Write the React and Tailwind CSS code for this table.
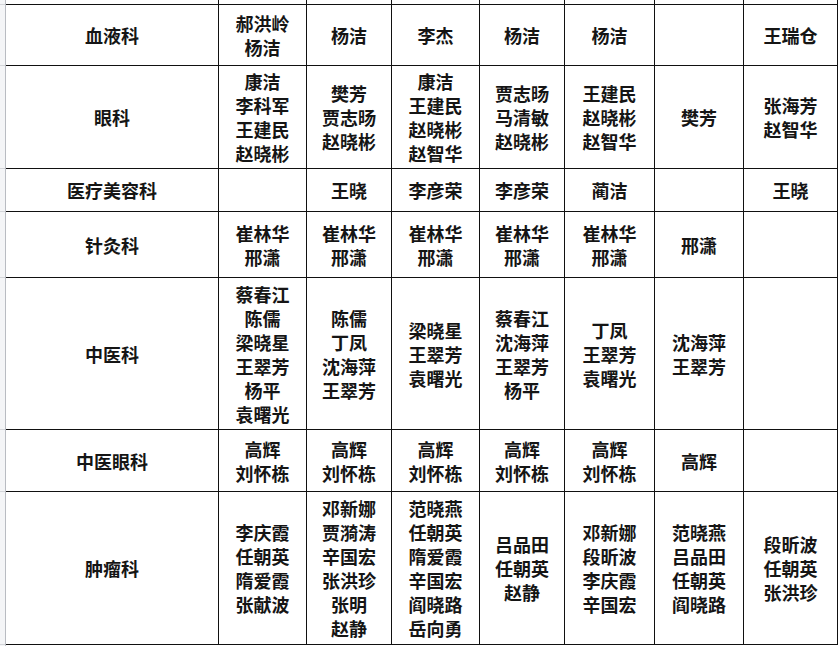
import React from "react";

const rows = [
  { label: "血液科", cells: [["郝洪岭", "杨洁"], ["杨洁"], ["李杰"], ["杨洁"], ["杨洁"], [], ["王瑞仓"]] },
  {
    label: "眼科",
    cells: [
      ["康洁", "李科军", "王建民", "赵晓彬"],
      ["樊芳", "贾志旸", "赵晓彬"],
      ["康洁", "王建民", "赵晓彬", "赵智华"],
      ["贾志旸", "马清敏", "赵晓彬"],
      ["王建民", "赵晓彬", "赵智华"],
      ["樊芳"],
      ["张海芳", "赵智华"],
    ],
  },
  { label: "医疗美容科", cells: [[], ["王晓"], ["李彦荣"], ["李彦荣"], ["蔺洁"], [], ["王晓"]] },
  {
    label: "针灸科",
    cells: [
      ["崔林华", "邢潇"],
      ["崔林华", "邢潇"],
      ["崔林华", "邢潇"],
      ["崔林华", "邢潇"],
      ["崔林华", "邢潇"],
      ["邢潇"],
      [],
    ],
  },
  {
    label: "中医科",
    cells: [
      ["蔡春江", "陈儒", "梁晓星", "王翠芳", "杨平", "袁曙光"],
      ["陈儒", "丁凤", "沈海萍", "王翠芳"],
      ["梁晓星", "王翠芳", "袁曙光"],
      ["蔡春江", "沈海萍", "王翠芳", "杨平"],
      ["丁凤", "王翠芳", "袁曙光"],
      ["沈海萍", "王翠芳"],
      [],
    ],
  },
  {
    label: "中医眼科",
    cells: [
      ["高辉", "刘怀栋"],
      ["高辉", "刘怀栋"],
      ["高辉", "刘怀栋"],
      ["高辉", "刘怀栋"],
      ["高辉", "刘怀栋"],
      ["高辉"],
      [],
    ],
  },
  {
    label: "肿瘤科",
    cells: [
      ["李庆霞", "任朝英", "隋爱霞", "张献波"],
      ["邓新娜", "贾漪涛", "辛国宏", "张洪珍", "张明", "赵静"],
      ["范晓燕", "任朝英", "隋爱霞", "辛国宏", "阎晓路", "岳向勇"],
      ["吕品田", "任朝英", "赵静"],
      ["邓新娜", "段昕波", "李庆霞", "辛国宏"],
      ["范晓燕", "吕品田", "任朝英", "阎晓路"],
      ["段昕波", "任朝英", "张洪珍"],
    ],
  },
];

const font = { fontFamily: '"Noto Sans CJK SC", "Noto Sans", sans-serif' };

function Cell({ lines }) {
  return (
    <div className="bg-white flex flex-col items-center justify-center text-[18px] leading-[24px] font-bold text-[#151515]">
      {lines.map((l, i) => (
        <div key={i}>{l}</div>
      ))}
    </div>
  );
}

export default function App() {
  const stripHeights = ["h-[5px]", "h-[61px]", "h-[103px]", "h-[43px]", "h-[66px]", "h-[152px]", "h-[62px]", "h-[153px]"];
  return (
    <div className="w-[839px] h-[646px] bg-white flex overflow-hidden" style={font}>
      <div className="w-[6px] flex flex-col bg-[#f4f5f7] border-r border-[#b9bcc2]">
        {stripHeights.map((h, i) => (
          <div key={i} className={`${h} border-b border-[#d3d5d9]`} />
        ))}
      </div>
      <div className="flex flex-col">
        <div className="grid grid-cols-[212px_87px_84px_87px_84px_89px_88px_93px] grid-rows-[4px_60px_102px_42px_65px_151px_61px_152px] gap-px bg-[#111] pr-px pb-px">
          {Array.from({ length: 8 }).map((_, i) => (
            <div key={"t" + i} className="bg-white" />
          ))}
          {rows.map((r) => (
            <React.Fragment key={r.label}>
              <div className="bg-white flex items-center justify-center text-[18px] leading-[24px] font-bold text-[#151515]">
                {r.label}
              </div>
              {r.cells.map((c, j) => (
                <Cell key={j} lines={c} />
              ))}
            </React.Fragment>
          ))}
        </div>
      </div>
    </div>
  );
}
